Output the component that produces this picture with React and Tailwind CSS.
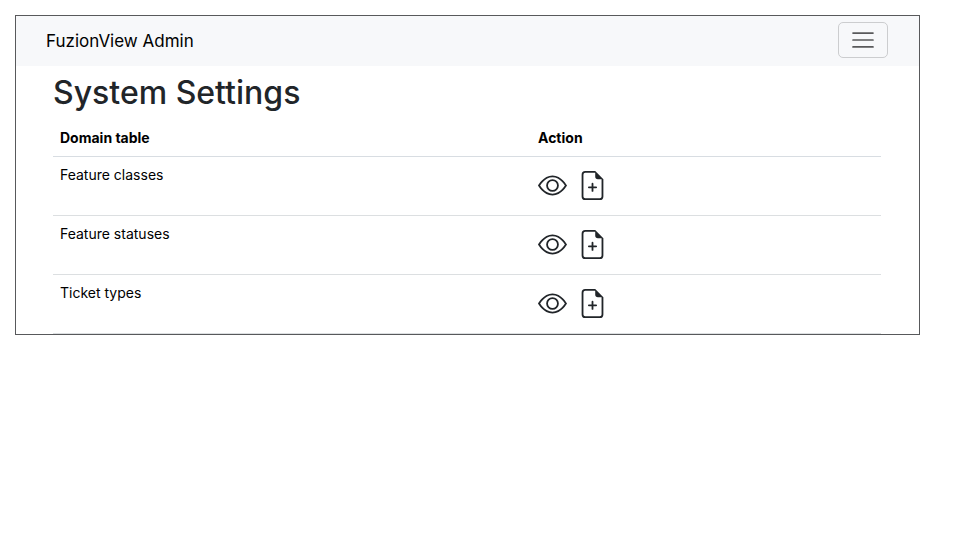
import { BsEye, BsFileEarmarkPlus } from 'react-icons/bs';

const domainTables = [
  { id: 'feature-classes', label: 'Feature classes' },
  { id: 'feature-statuses', label: 'Feature statuses' },
  { id: 'ticket-types', label: 'Ticket types' },
];

function Navbar() {
  return (
    <nav className="flex items-center justify-between bg-[#f7f8fa] pt-1.5 pb-2 pr-[31px] pl-[30px]">
      <a href="#" className="pt-0.5 text-[17px] leading-6 text-black">
        FuzionView Admin
      </a>
      <button
        type="button"
        aria-label="Toggle navigation"
        className="flex h-9 w-[50px] items-center justify-center rounded-[5px] border border-[#cccdcf]"
      >
        <svg viewBox="0 0 30 30" className="size-[26px]" fill="none" stroke="#59595b" strokeWidth="2" strokeLinecap="round">
          <path d="M3.5 7h23M3.5 15h23M3.5 23h23" />
        </svg>
      </button>
    </nav>
  );
}

export default function App() {
  return (
    <div className="min-h-screen bg-white pt-[15px] pr-10 pl-[15px] font-['Inter',sans-serif]">
      <div className="border border-[#58595b]">
        <Navbar />

        <main className="pt-1.5 pr-[38px] pl-[37px]">
          <h1 className="text-[32px] leading-[42px] font-medium text-[#212529]">System Settings</h1>

          <table className="mt-1.5 w-full table-fixed border-collapse text-left text-sm text-black">
            <thead>
              <tr className="border-b border-[#d8dde2]">
                <th className="w-[478px] px-[7px] pt-2 pb-2 font-bold">Domain table</th>
                <th className="px-[7px] pt-2 pb-2 font-bold">Action</th>
              </tr>
            </thead>
            <tbody>
              {domainTables.map((table) => (
                <tr key={table.id} className="border-b border-[#dcdfe1]">
                  <td className="px-[7px] pt-2 align-top">{table.label}</td>
                  <td className="px-[7px] pt-3.5 pb-[15px] align-top">
                    <div className="flex gap-[11px] text-[#212529]">
                      <a href={`#${table.id}`} aria-label={`View ${table.label}`}>
                        <BsEye className="size-[29px]" />
                      </a>
                      <a href={`#${table.id}-new`} aria-label={`Add to ${table.label}`}>
                        <BsFileEarmarkPlus className="size-[29px]" />
                      </a>
                    </div>
                  </td>
                </tr>
              ))}
            </tbody>
          </table>
        </main>
      </div>
    </div>
  );
}
